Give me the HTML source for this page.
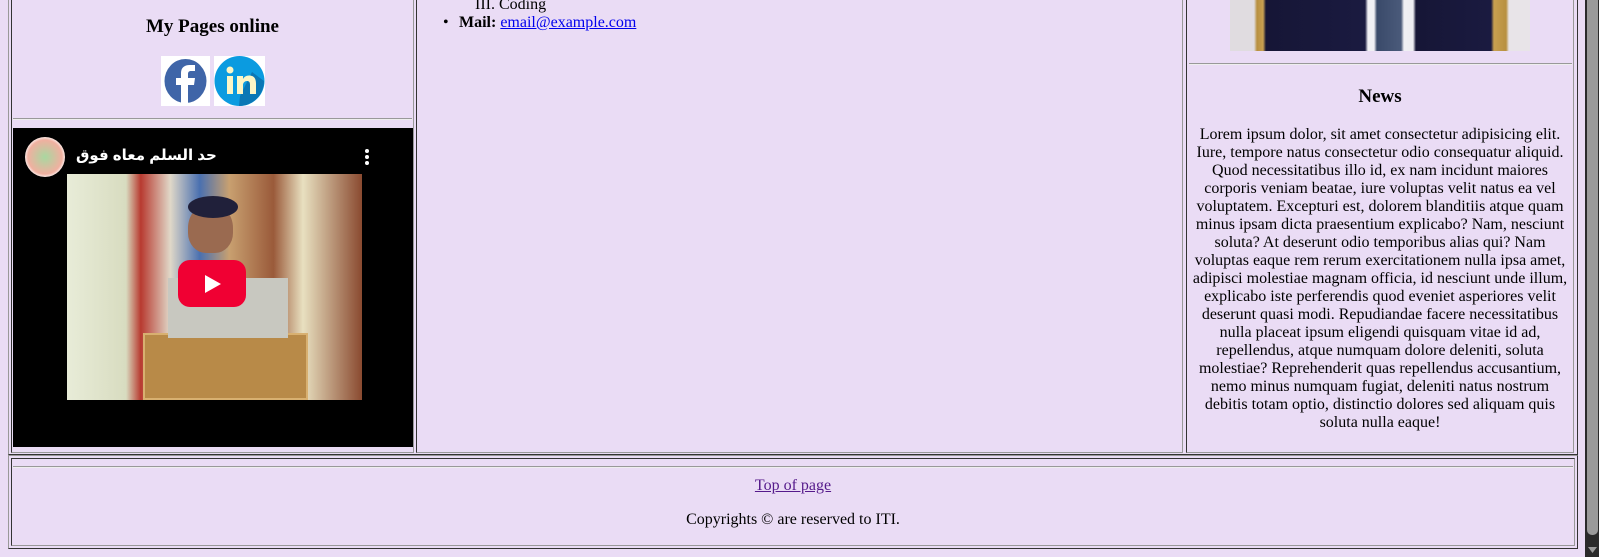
<!DOCTYPE html>
<html><head><meta charset="utf-8"><style>
html,body{margin:0;padding:0;width:1599px;height:557px;overflow:hidden;background:#EADCF5;font-family:"Liberation Serif",serif;color:#000}
.a{position:absolute}
.ot{border-left:1px solid #999;border-top:1px solid #999;border-right:1px solid #333;border-bottom:1px solid #333}
.c{border-left:1px solid #333;border-top:1px solid #333;border-right:1px solid #999;border-bottom:1px solid #999}
.hr{height:0;border-top:1px solid #999;border-bottom:1px solid #eee}
a{color:#00e}
</style></head><body>
<!-- main table -->
<div class="a ot" style="left:8px;top:-10px;width:1568px;height:463px"></div>
<div class="a c" style="left:11px;top:-8px;width:401px;height:459px"></div>
<div class="a c" style="left:416px;top:-8px;width:765px;height:459px"></div>
<div class="a c" style="left:1186px;top:-8px;width:386px;height:459px"></div>

<!-- left cell -->
<div class="a" style="left:12px;width:401px;top:16px;text-align:center;font-weight:bold;font-size:19px">My Pages online</div>
<svg class="a" style="left:161px;top:56px" width="49" height="50" viewBox="0 0 49 50"><rect width="49" height="50" fill="#fff"/><ellipse cx="24.5" cy="25" rx="21" ry="22" fill="#3f65a8"/><path d="M27 47V29h6l1-7h-7v-4c0-2 1-3 3-3h4V9h-5c-6 0-9 3-9 8v5h-5v7h5v18z" fill="#fff"/></svg>
<svg class="a" style="left:214px;top:56px" width="51" height="50" viewBox="0 0 51 50"><rect width="51" height="50" fill="#fff"/><ellipse cx="25.5" cy="25" rx="25" ry="25" fill="#0b9be0"/><path d="M25 50 A25 25 0 0 0 50 25 L38 16 L26 40Z" fill="#0a77b5"/><rect x="13" y="20" width="6" height="18" fill="#fdf6c6"/><circle cx="16" cy="14" r="3.5" fill="#fdf6c6"/><path d="M23 20h6v3c1-2 3-3.5 6-3.5 5 0 7 3 7 8V38h-6v-9c0-3-1-4-3-4s-4 1.5-4 4v9h-6z" fill="#fdf6c6"/></svg>
<div class="a hr" style="left:13px;top:118px;width:399px"></div>
<div class="a" style="left:13px;top:128px;width:400px;height:319px;background:#000;overflow:hidden">
  <div class="a" style="left:54px;top:46px;width:295px;height:226px;background:linear-gradient(90deg,#e8ecd8 0%,#d8dcc0 20%,#b83a30 25%,#e0d8c8 35%,#4a70b0 45%,#c8a070 55%,#9a5a3a 70%,#e8e0c0 80%,#8a4a30 100%)"></div>
  <div class="a" style="left:130px;top:205px;width:165px;height:67px;background:#b88a48;border:2px solid #d8b070;box-sizing:border-box"></div>
  <div class="a" style="left:155px;top:150px;width:120px;height:60px;background:#c8c8c0"></div>
  <div class="a" style="left:175px;top:75px;width:45px;height:50px;border-radius:50% 50% 40% 40%;background:#9a6a50"></div>
  <div class="a" style="left:175px;top:68px;width:50px;height:22px;border-radius:50%;background:#20203a"></div>
  <div class="a" style="left:12px;top:9px;width:40px;height:40px;border-radius:50%;background:radial-gradient(circle,#a8d8a0,#f0b0a0 60%,#fff 75%)"></div>
  <div class="a" style="left:63px;top:18px;color:#fff;font-family:'Liberation Sans','DejaVu Sans',sans-serif;font-size:15px;font-weight:bold;direction:rtl">حد السلم معاه فوق</div>
  <div class="a" style="left:352px;top:21px;width:4px;height:4px;border-radius:50%;background:#fff;box-shadow:0 6px 0 #fff,0 12px 0 #fff"></div>
  <div class="a" style="left:165px;top:132px;width:68px;height:47px;background:#f00033;border-radius:12px"></div>
  <svg class="a" style="left:190px;top:146px" width="20" height="20"><path d="M2 1L18 10L2 19Z" fill="#fff"/></svg>
</div>

<!-- middle cell -->
<div class="a" style="left:475px;top:-4px;font-size:16px">III. Coding</div>
<div class="a" style="left:443px;top:14px;font-size:16px">•</div>
<div class="a" style="left:459px;top:14px;font-size:16px"><b>Mail:</b> <a href="#">email@example.com</a></div>

<!-- right cell -->
<div class="a" style="left:1230px;top:0;width:300px;height:51px;background:linear-gradient(90deg,#e0dce0 0%,#e0dce0 8%,#b89040 9%,#c8a050 11%,#161636 12%,#1a1a40 45%,#f0f0f4 46%,#f0f0f4 48%,#3a4a6a 49%,#4a5a7a 57%,#f0f0f4 58%,#eeeef2 61%,#161636 62%,#1a1a40 87%,#c8a050 88%,#b89040 92%,#e8e4e8 93%)"></div>
<div class="a hr" style="left:1189px;top:63px;width:383px"></div>
<div class="a" style="left:1187px;width:386px;top:86px;text-align:center;font-weight:bold;font-size:19px">News</div>
<div class="a" style="left:1187px;width:386px;top:126px;text-align:center;font-size:16px;line-height:18px">Lorem ipsum dolor, sit amet consectetur adipisicing elit.<br>Iure, tempore natus consectetur odio consequatur aliquid.<br>Quod necessitatibus illo id, ex nam incidunt maiores<br>corporis veniam beatae, iure voluptas velit natus ea vel<br>voluptatem. Excepturi est, dolorem blanditiis atque quam<br>minus ipsam dicta praesentium explicabo? Nam, nesciunt<br>soluta? At deserunt odio temporibus alias qui? Nam<br>voluptas eaque rem rerum exercitationem nulla ipsa amet,<br>adipisci molestiae magnam officia, id nesciunt unde illum,<br>explicabo iste perferendis quod eveniet asperiores velit<br>deserunt quasi modi. Repudiandae facere necessitatibus<br>nulla placeat ipsum eligendi quisquam vitae id ad,<br>repellendus, atque numquam dolore deleniti, soluta<br>molestiae? Reprehenderit quas repellendus accusantium,<br>nemo minus numquam fugiat, deleniti natus nostrum<br>debitis totam optio, distinctio dolores sed aliquam quis<br>soluta nulla eaque!</div>

<!-- footer -->
<div class="a ot" style="left:8px;top:455px;width:1568px;height:92px"></div>
<div class="a c" style="left:11px;top:458px;width:1562px;height:86px"></div>
<div class="a hr" style="left:13px;top:466px;width:1560px"></div>
<div class="a" style="left:12px;width:1562px;top:477px;text-align:center;font-size:16px"><a href="#" style="color:#551a8b">Top of page</a></div>
<div class="a" style="left:12px;width:1562px;top:511px;text-align:center;font-size:16px">Copyrights © are reserved to ITI.</div>

<!-- scrollbar -->
<div class="a" style="left:1585px;top:0;width:14px;height:557px;background:#2a2a2a"></div>
<div class="a" style="left:1587px;top:0;width:11px;height:535px;background:#9a9a9a;border-radius:0 0 5px 5px"></div>
<svg class="a" style="left:1587px;top:546px" width="11" height="8"><path d="M1 1H10L5.5 7Z" fill="#9a9a9a"/></svg>
</body></html>
